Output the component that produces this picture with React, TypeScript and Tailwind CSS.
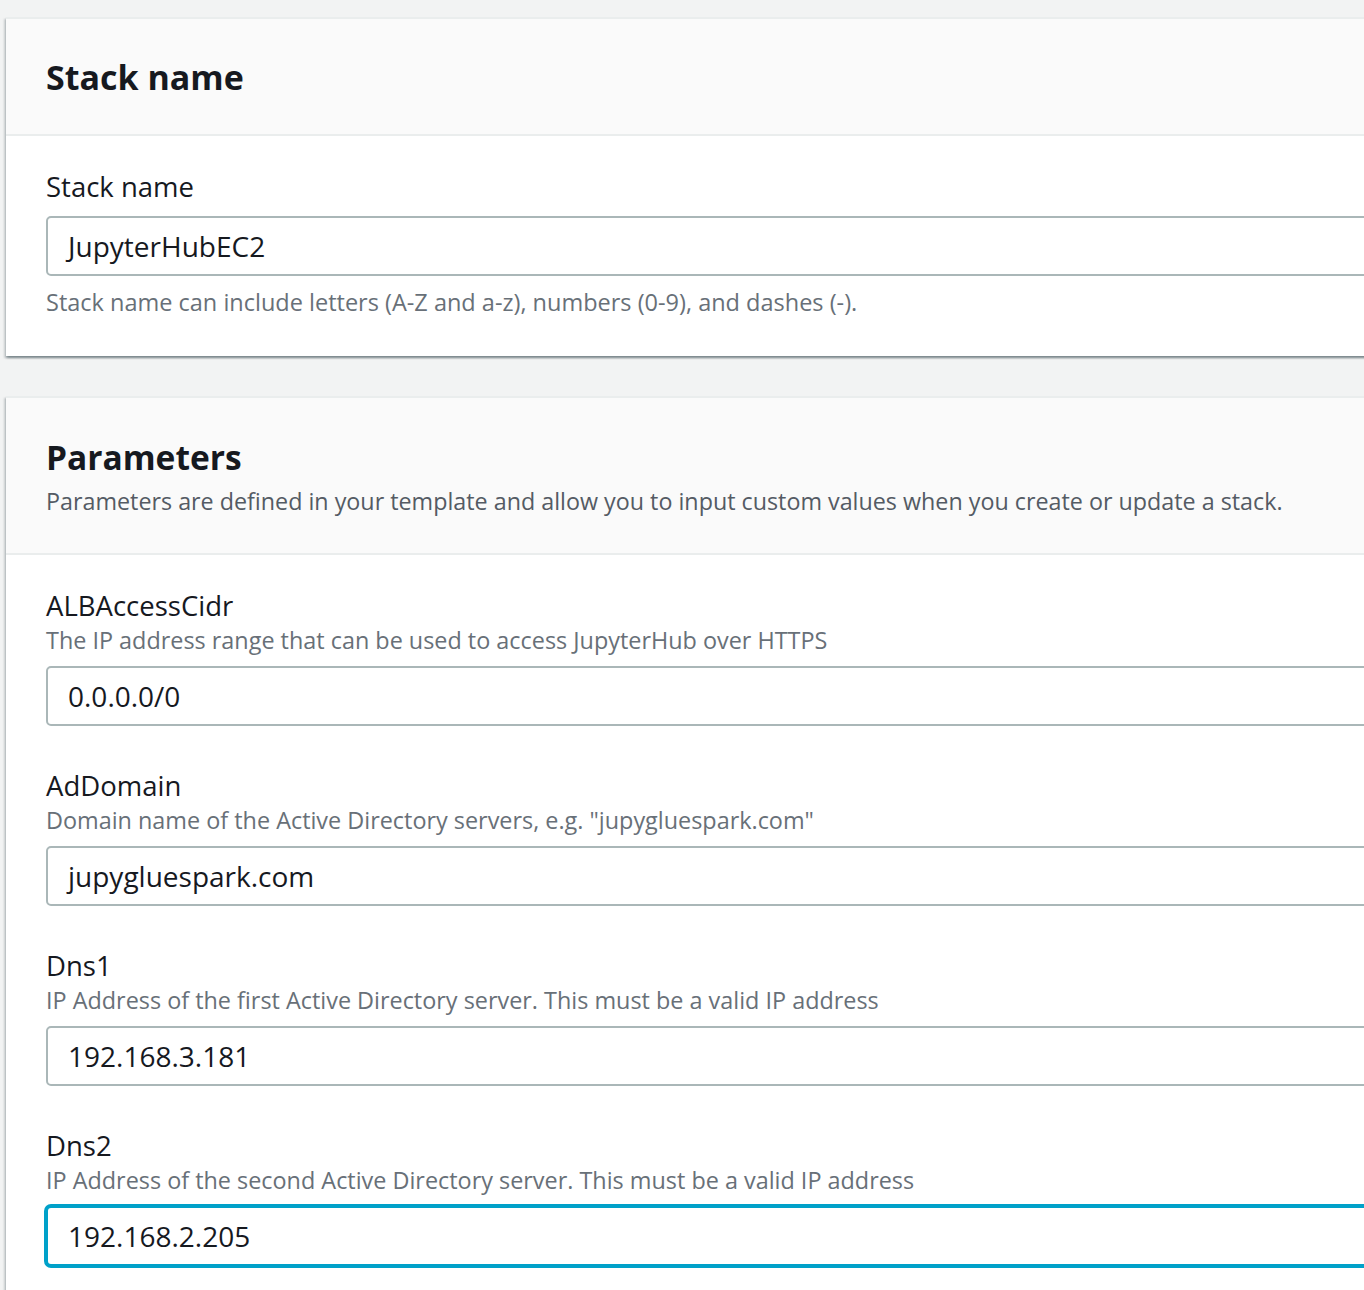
import React from "react";

const font = { fontFamily: '"Open Sans", "Noto Sans", Arial, sans-serif' };

type Field = { label: string; desc: string; value: string; focused?: boolean };

const fields: Field[] = [
  { label: "ALBAccessCidr", desc: "The IP address range that can be used to access JupyterHub over HTTPS", value: "0.0.0.0/0" },
  { label: "AdDomain", desc: 'Domain name of the Active Directory servers, e.g. "jupygluespark.com"', value: "jupygluespark.com" },
  { label: "Dns1", desc: "IP Address of the first Active Directory server. This must be a valid IP address", value: "192.168.3.181" },
  { label: "Dns2", desc: "IP Address of the second Active Directory server. This must be a valid IP address", value: "192.168.2.205", focused: true },
];

function Input({ value, focused }: { value: string; focused?: boolean }) {
  return (
    <div
      className={
        "h-[60px] w-[1400px] rounded-[5px] border-2 bg-white pl-[20px] flex items-center text-[28px] text-[#16191f] " +
        (focused ? "border-[#00a1c9] shadow-[0_0_0_2px_#00a1c9]" : "border-[#aab7b8]")
      }
    >
      {value}
    </div>
  );
}

export default function App() {
  return (
    <div className="min-h-[1290px] w-[1364px] overflow-hidden bg-[#f2f3f3] pt-[17px] pl-[6px]" style={font}>
      <div className="w-[1420px] bg-white border-t-2 border-[#eaeded] shadow-[0_2px_2px_0_rgba(0,28,36,0.3),2px_2px_2px_0_rgba(0,28,36,0.15),-2px_2px_2px_0_rgba(0,28,36,0.15)]">
        <div className="bg-[#fafafa] border-b-2 border-[#eaeded] px-[40px] pt-[36px] pb-[35px]">
          <h2 className="text-[34px] leading-[44px] font-bold text-[#16191f]">Stack name</h2>
        </div>
        <div className="px-[40px] pt-[33px] pb-[38px]">
          <div className="text-[27.5px] leading-[36px] text-[#16191f] mb-[11px]">Stack name</div>
          <Input value="JupyterHubEC2" />
          <div className="mt-[10px] text-[23.5px] leading-[32px] text-[#687078]">
            Stack name can include letters (A-Z and a-z), numbers (0-9), and dashes (-).
          </div>
        </div>
      </div>

      <div className="mt-[40px] w-[1420px] bg-white border-t-2 border-[#eaeded] shadow-[0_2px_2px_0_rgba(0,28,36,0.3),2px_2px_2px_0_rgba(0,28,36,0.15),-2px_2px_2px_0_rgba(0,28,36,0.15)]">
        <div className="bg-[#fafafa] border-b-2 border-[#eaeded] px-[40px] pt-[37px] pb-[30px]">
          <h2 className="text-[33.5px] leading-[44px] font-bold text-[#16191f]">Parameters</h2>
          <div className="text-[23.3px] leading-[44px] text-[#545b64]">
            Parameters are defined in your template and allow you to input custom values when you create or update a stack.
          </div>
        </div>
        <div className="px-[40px] pt-[33px] pb-[40px] flex flex-col gap-[42px]">
          {fields.map((f) => (
            <div key={f.label}>
              <div className="text-[27.5px] leading-[36px] text-[#16191f]">{f.label}</div>
              <div className="text-[23.4px] leading-[32px] text-[#687078] mb-[10px]">{f.desc}</div>
              <Input value={f.value} focused={f.focused} />
            </div>
          ))}
        </div>
      </div>
    </div>
  );
}
